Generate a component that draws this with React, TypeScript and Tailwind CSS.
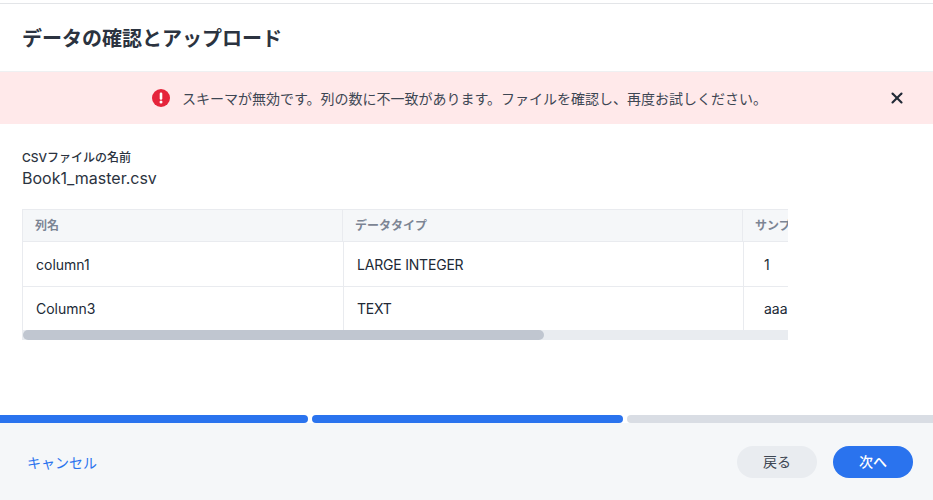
import { X } from "lucide-react";

const font = "font-['Inter','Noto_Sans_CJK_JP',sans-serif]";

const rows = [
  { name: "column1", type: "LARGE INTEGER", sample: "1" },
  { name: "Column3", type: "TEXT", sample: "aaa" },
];

export default function App() {
  return (
    <div className={`${font} flex h-[500px] w-[933px] flex-col overflow-hidden bg-white`}>
      <div className="mt-[3px] h-px bg-[#e3e5e8]" />
      <h1 className="flex h-[67px] items-center px-[22px] pt-[2px] text-[20px] font-semibold text-[#2b3340]">
        データの確認とアップロード
      </h1>

      <div className="relative flex h-[53px] items-center justify-center border-t border-[#eff0f2] bg-[#ffe9ea] pr-[14px]">
        <svg width="18" height="18" viewBox="0 0 18 18" className="mr-[12px]">
          <circle cx="9" cy="9" r="9" fill="#e5243b" />
          <rect x="7.7" y="3.5" width="2.6" height="7.2" rx="1.2" fill="#fff" />
          <circle cx="9" cy="13.1" r="1.5" fill="#fff" />
        </svg>
        <span className="text-[14px] text-[#3d4653]">
          スキーマが無効です。列の数に不一致があります。ファイルを確認し、再度お試しください。
        </span>
        <X
          size={18}
          strokeWidth={2.8}
          className="absolute left-[888px] top-[17px] text-[#212936]"
        />
      </div>

      <div className="flex-1 px-[22px] pt-[26px]">
        <div className="text-[12px] leading-[16px] font-medium text-[#2b3340]">
          CSVファイルの名前
        </div>
        <div className="text-[16px] leading-[24px] text-[#2b3340]">
          Book1_master.csv
        </div>

        <div className="mt-[19px] w-[766px] overflow-hidden border-t border-l border-[#e9ebef]">
          <div className="flex h-[32px] w-[900px] border-b border-[#e9ebef] bg-[#f5f7f9] text-[12px] font-semibold text-[#7c8594]">
            <div className="flex w-[320px] shrink-0 items-center border-r border-[#e9ebef] pl-[12px]">
              列名
            </div>
            <div className="flex w-[400px] shrink-0 items-center border-r border-[#e9ebef] pl-[12px]">
              データタイプ
            </div>
            <div className="flex items-center pl-[12px]">サンプル</div>
          </div>
          {rows.map((row, index) => (
            <div
              key={row.name}
              className={`flex w-[900px] text-[14px] text-[#212936] ${
                index === 0 ? "h-[45px] border-b border-[#e9ebef]" : "h-[43px]"
              }`}
            >
              <div className="flex w-[321px] shrink-0 items-center border-r border-[#e9ebef] pl-[13px]">
                {row.name}
              </div>
              <div className="flex w-[400px] shrink-0 items-center border-r border-[#e9ebef] pl-[13px]">
                <span className="tracking-[-0.2px]">{row.type}</span>
              </div>
              <div className="flex items-center pl-[20px]">{row.sample}</div>
            </div>
          ))}
          <div className="h-[10px] bg-[#e9ecf0]">
            <div className="h-full w-[521px] rounded-full bg-[#c0c6d0]" />
          </div>
        </div>
      </div>

      <div className="flex h-[8px] gap-[4px]">
        <div className="w-[308px] rounded-r-full bg-[#2a73ee]" />
        <div className="w-[311px] rounded-full bg-[#2a73ee]" />
        <div className="flex-1 rounded-l-full bg-[#d9dde4]" />
      </div>

      <div className="flex h-[77px] items-center justify-between bg-[#f5f7f9] pr-[20px] pl-[27px]">
        <button className="pt-[2px] text-[14px] text-[#2a73ee]">キャンセル</button>
        <div className="flex gap-[16px]">
          <button className="h-[32px] w-[80px] rounded-full bg-[#e9ecf0] text-[14px] text-[#3d4653]">
            戻る
          </button>
          <button className="h-[32px] w-[80px] rounded-full bg-[#2a73ee] text-[14px] font-medium text-white">
            次へ
          </button>
        </div>
      </div>
    </div>
  );
}
